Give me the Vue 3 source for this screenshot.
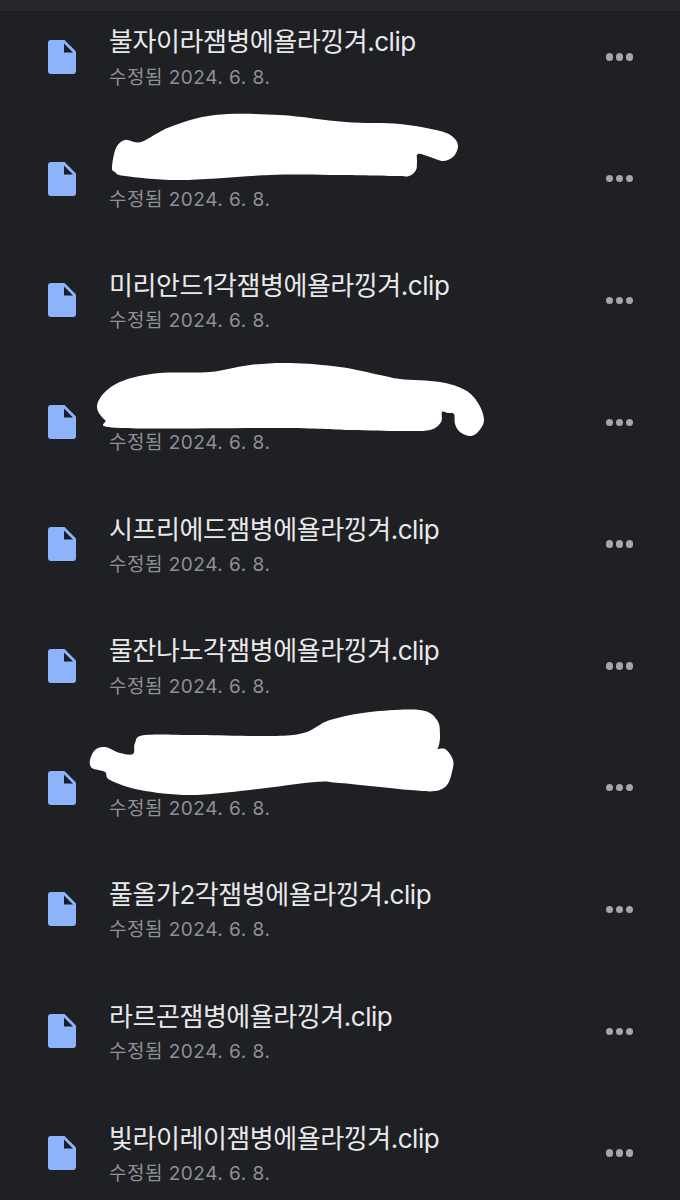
<script setup>
const files = [
  '불자이라잼병에욜라낑겨.clip',
  '',
  '미리안드1각잼병에욜라낑겨.clip',
  '',
  '시프리에드잼병에욜라낑겨.clip',
  '물잔나노각잼병에욜라낑겨.clip',
  '',
  '풀올가2각잼병에욜라낑겨.clip',
  '라르곤잼병에욜라낑겨.clip',
  '빛라이레이잼병에욜라낑겨.clip'
]

const scribbles = [
  [[112,167],[116,148],[125,140],[141,142],[170,127],[215,115],[280,115],[345,122],[400,124],[440,131],[454,138],[458,147],[453,157],[443,161],[430,157],[418,154],[417,162],[416,170],[409,176],[395,176],[330,175],[270,175],[180,180],[125,176],[115,172]],
  [[97,407],[105,392],[125,380],[160,373],[210,372],[250,365],[290,363],[340,367],[380,375],[400,379],[440,382],[465,390],[478,403],[484,420],[478,432],[470,436],[460,432],[455,424],[454,414],[448,413],[442,412],[441,422],[430,430],[400,431],[350,430],[280,428],[120,428],[105,420]],
  [[90,760],[95,750],[105,747],[120,753],[133,754],[135,743],[145,735],[200,735],[293,735],[330,720],[370,712],[420,710],[437,720],[440,735],[438,748],[433,750],[445,749],[453,760],[452,772],[447,785],[435,791],[410,790],[340,783],[315,782],[250,790],[190,795],[140,790],[110,780],[105,772],[92,768]]
]

function smooth(p) {
  const n = p.length
  let d = `M${p[0][0]} ${p[0][1]}`
  for (let i = 0; i < n; i++) {
    const a = p[(i - 1 + n) % n], b = p[i], c = p[(i + 1) % n], e = p[(i + 2) % n]
    const c1x = b[0] + (c[0] - a[0]) / 6, c1y = b[1] + (c[1] - a[1]) / 6
    const c2x = c[0] - (e[0] - b[0]) / 6, c2y = c[1] - (e[1] - b[1]) / 6
    d += `C${c1x.toFixed(1)} ${c1y.toFixed(1)} ${c2x.toFixed(1)} ${c2y.toFixed(1)} ${c[0]} ${c[1]}`
  }
  return d + 'Z'
}
const paths = scribbles.map(smooth)
</script>

<template>
  <div class="screen">
    <div class="topbar"></div>
    <ul class="list">
      <li v-for="(name, i) in files" :key="i" class="row">
        <svg class="file" viewBox="0 0 28 34" width="28" height="34" aria-hidden="true">
          <path class="file-body" d="M3 0H16.5L28 11.5V31a3 3 0 0 1-3 3H3a3 3 0 0 1-3-3V3a3 3 0 0 1 3-3Z" />
          <path class="file-fold" d="M16 3.5V12.5H25Z" />
        </svg>
        <div class="text">
          <div class="title">{{ name || '\u00a0' }}</div>
          <div class="date">수정됨 2024. 6. 8.</div>
        </div>
        <div class="more"><span></span><span></span><span></span></div>
      </li>
    </ul>
    <svg class="scribble" viewBox="0 0 680 1200" width="680" height="1200" aria-hidden="true">
      <path v-for="(d, i) in paths" :key="i" :d="d" />
    </svg>
  </div>
</template>

<style scoped>
.screen {
  position: relative;
  width: 680px;
  height: 1200px;
  overflow: hidden;
  background: #1f2024;
  font-family: Inter, "Noto Sans CJK KR", sans-serif;
}
.topbar {
  position: absolute;
  top: 0;
  left: 0;
  right: 0;
  height: 11px;
  background: #25272b;
  border-bottom: 1px solid #1b1c20;
  z-index: 1;
}
.list {
  list-style: none;
  margin: -4px 0 0;
  padding: 0;
}
.row {
  display: flex;
  align-items: center;
  height: 121.8px;
  padding: 0 47px 0 48px;
}
.file {
  flex: none;
}
.file-body {
  fill: #8db4fb;
}
.file-fold {
  fill: #1b1d26;
}
.text {
  flex: 1;
  min-width: 0;
  margin-left: 33px;
  padding-top: 1.5px;
  display: flex;
  flex-direction: column;
  gap: 6.5px;
}
.title {
  font-size: 26px;
  line-height: 34px;
  letter-spacing: -0.45px;
  color: #e9e9eb;
  white-space: nowrap;
}
.date {
  font-size: 19px;
  line-height: 24px;
  letter-spacing: 0.5px;
  color: #8f9094;
  white-space: nowrap;
}
.more {
  display: flex;
  gap: 2.5px;
}
.more span {
  width: 7.5px;
  height: 7.5px;
  border-radius: 50%;
  background: #a4a6ab;
}
.scribble {
  position: absolute;
  top: 0;
  left: 0;
}
.scribble path {
  fill: #fff;
}
</style>
